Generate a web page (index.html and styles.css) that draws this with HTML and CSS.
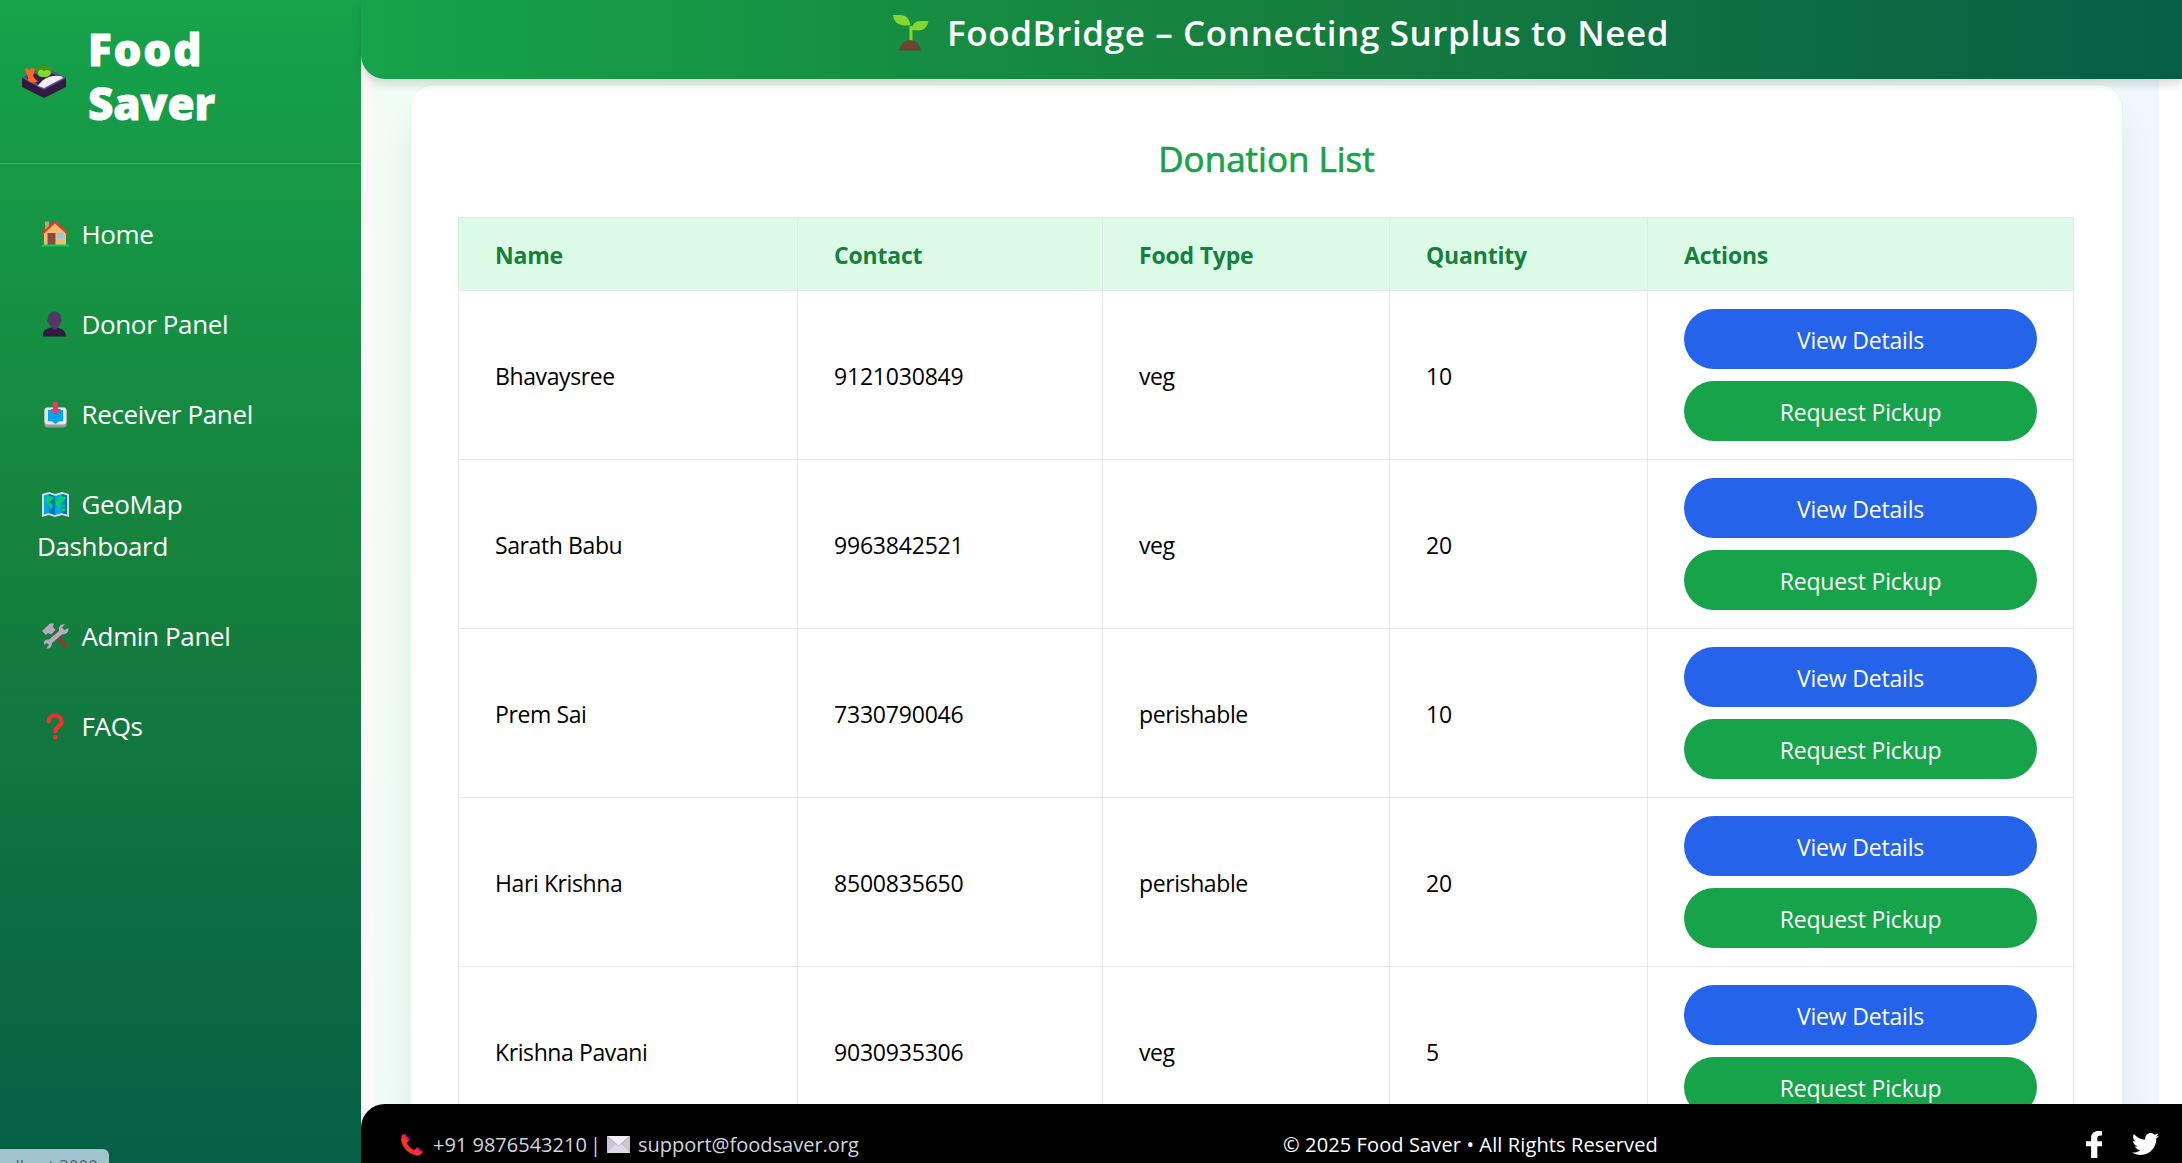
FILE: index.html
```html
<!DOCTYPE html>
<html lang="en">
<head>
<meta charset="utf-8">
<title>Food Saver</title>
<link rel="stylesheet" href="styles.css">
</head>
<body>
<div class="app">
  <aside class="sidebar">
    <div class="brand">
      <svg class="brand-icon" viewBox="0 0 44 34">
        <path d="M0 13 22 2 44 13V22L22 33 0 22Z" fill="#321b41"/>
        <path d="M0 13 22 2 44 13 22 25Z" fill="#5c508f"/>
        <path d="M4 13 22 5 40 13 22 22Z" fill="#33204a"/>
        <path d="M16 21C20 14 29 9 40 11.500L41 13 22 23Z" fill="#f3eef8"/>
        <path d="M14 6C14 2 18 0 22 1 27 0 30 3 30 6 29 11 25 13 22 12 17 12 14 10 14 6Z" fill="#44911b"/>
        <path d="M16 8C16 4 20 4 22 6 25 4 29 5 29 8 28 11 25 12 22 12 18 12 16 11 16 8Z" fill="#86d72f"/>
        <path d="M3 4Q6 2 7.500 6 9 1 12.500 3.500 13 7 11 10 12 14 16 16 13 19 8 17 5 15 6 11 3 7 3 4Z" fill="#ff6723"/>
      </svg>
      <h1 class="brand-name"><span class="brand-first">Food</span><span class="brand-second">Saver</span></h1>
    </div>
    <nav class="nav">
      <a class="nav-link"><svg class="nav-icon" viewBox="0 0 28 28"><path d="M4 1.500H8V9H4Z" fill="#d39b5c"/><path d="M3 13 14 3 25 13V25H3Z" fill="#f2bd73"/><path d="M1 14 14 2 27 14" fill="none" stroke="#f8312f" stroke-width="2.200"/><path d="M6.500 13H14.500V25H6.500Z" fill="#8a4b45"/><path d="M16 13H22V18.500H16Z" fill="#83cbff"/><path d="M1 24.500H28V26.500H1Z" fill="#00d26a"/></svg><span>Home</span></a>
      <a class="nav-link"><svg class="nav-icon" viewBox="0 0 28 28"><path d="M2 26.500Q1 19 10 17.500H16Q25 19 25 26.500Z" fill="#321b41"/><path d="M7 9Q7 1.500 13.500 1.500T20 9Q22 10 19.500 13 18 17 16 17.500V19.500H11.500V17.500Q9 16 7.500 13 5 10 7 9Z" fill="#533566"/></svg><span>Donor Panel</span></a>
      <a class="nav-link"><svg class="nav-icon" viewBox="0 0 28 28"><rect x="3.500" y="7.500" width="22" height="20" rx="3" fill="#9b9b9b"/><rect x="3.500" y="7.500" width="22" height="17" rx="3" fill="#e6e6e6"/><path d="M7 10H22V21L18 21.500 14.500 24 11 21.500 7 21Z" fill="#00a6ed"/><path d="M12 2H17V9H20L14.500 15 9.500 9H12Z" fill="#f8315f"/></svg><span>Receiver Panel</span></a>
      <a class="nav-link"><svg class="nav-icon" viewBox="0 0 28 28"><path d="M1 4 8 2 14 4 21 2 28 4V27L21 25 14 27 8 25 1 27Z" fill="#d9d9e0"/><path d="M3 5.500 8 4 14 6 21 4 26 5.500V24.500L21 23 14 25 8 23 3 24.500Z" fill="#00a6ed"/><path d="M8 4 14 6V25L8 23ZM21 4 26 5.500V24.500L21 23Z" fill="#0074ba"/><path d="M4 8 9 6 13 7 11 10 8 12 12 15 10 20 7 14 4 11ZM15 9 19 6 25 7 23 11 20 13 18 20 15 14ZM21 15H24V17H21ZM21 19 24 18V21H21Z" fill="#00d26a"/></svg><span>GeoMap Dashboard</span></a>
      <a class="nav-link"><svg class="nav-icon" viewBox="0 0 28 28"><path d="M11 10 14 8 26 22Q27 26 23 26.500Z" fill="#7d4533"/><path d="M1 9 9 1.500H13L12 5 14.500 8 10 12.500 7 11 5 13Z" fill="#b4acbc"/><path d="M18 9Q17 2 24 2L21 5.500 23.500 8 27.500 6Q28 12 21 12.500L11 21Q11 27 5 26.500L8 23 6 21 3 23Q2 17 8 17.500Z" fill="#b4acbc"/></svg><span>Admin Panel</span></a>
      <a class="nav-link"><svg class="nav-icon" viewBox="0 0 28 28"><path d="M7.500 9.500C7.500 1.500 20.500 1.500 20.500 9.500 20.500 15 14.500 13.500 14.500 19.500" fill="none" stroke="#f92f2f" stroke-width="4.200" stroke-linecap="round"/><circle cx="14.200" cy="25.300" r="2.400" fill="#f92f2f"/></svg><span>FAQs</span></a>
    </nav>
    <div class="status"><span>localhost:3000</span></div>
  </aside>
  <div class="page">
    <header class="topbar">
      <svg class="sprout" viewBox="0 0 38 38"><path d="M17.500 12H20.500V28H17.500Z" fill="#86d72f"/><path d="M1 1H9Q17 1 18.500 11.500H11Q2 10.500 1 1Z" fill="#86d72f"/><path d="M19.500 16Q20 7.500 28 7H36.500Q35 16 27 16.500Z" fill="#86d72f"/><path d="M7 36.500Q9 26 18 26T29 36.500Z" fill="#6d4534"/></svg>
      <span class="topbar-title">FoodBridge – Connecting Surplus to Need</span>
    </header>
    <main class="content">
      <section class="card">
        <h2 class="card-title">Donation List</h2>
        <table class="donations">
          <colgroup><col class="c-name"><col class="c-contact"><col class="c-type"><col class="c-qty"><col class="c-act"></colgroup>
          <thead><tr><th>Name</th><th>Contact</th><th>Food Type</th><th>Quantity</th><th>Actions</th></tr></thead>
          <tbody>
            <tr><td>Bhavaysree</td><td class="num">9121030849</td><td>veg</td><td class="num">10</td><td class="action-cell"><div class="actions"><button class="btn view">View Details</button><button class="btn pickup">Request Pickup</button></div></td></tr>
            <tr><td>Sarath Babu</td><td class="num">9963842521</td><td>veg</td><td class="num">20</td><td class="action-cell"><div class="actions"><button class="btn view">View Details</button><button class="btn pickup">Request Pickup</button></div></td></tr>
            <tr><td>Prem Sai</td><td class="num">7330790046</td><td>perishable</td><td class="num">10</td><td class="action-cell"><div class="actions"><button class="btn view">View Details</button><button class="btn pickup">Request Pickup</button></div></td></tr>
            <tr><td>Hari Krishna</td><td class="num">8500835650</td><td>perishable</td><td class="num">20</td><td class="action-cell"><div class="actions"><button class="btn view">View Details</button><button class="btn pickup">Request Pickup</button></div></td></tr>
            <tr><td>Krishna Pavani</td><td class="num">9030935306</td><td>veg</td><td class="num">5</td><td class="action-cell"><div class="actions"><button class="btn view">View Details</button><button class="btn pickup">Request Pickup</button></div></td></tr>
          </tbody>
        </table>
      </section>
    </main>
    <footer class="footer">
      <div class="contact">
        <svg class="phone" viewBox="0 0 22 22"><path d="M1 1 4 0 8 6 6 9Q8 14 13 16L16 14 21.500 18Q20 22 15 21.500 2 18 0 6Z" fill="#f8312f"/><path d="M2 .5 4 0 8.500 5 7.500 7ZM14.500 14 16.500 13 22 17.500 21 19Z" fill="#ca0b8a"/></svg>
        <span class="tel">+91 9876543210<span class="pipe"> |</span></span>
        <svg class="mail" viewBox="0 0 23 17"><path d="M0 0H23V17H0Z" fill="#cdc4d6"/><path d="M0 17 9 8H14L23 17Z" fill="#e1d8ec"/><path d="M0 0H23L11.500 10Z" fill="#f3eef8"/><path d="M0 0 11.500 10 23 0" stroke="#b4acbc" fill="none"/></svg>
        <span class="email">support@foodsaver.org</span>
      </div>
      <p class="copy">© 2025 Food Saver • All Rights Reserved</p>
      <div class="social">
        <svg class="fb" viewBox="22.890 0 256 512" preserveAspectRatio="none"><path d="M279.140 288l14.220-92.660h-88.910v-60.130c0-25.350 12.420-50.060 52.240-50.060h40.420V6.260S260.430 0 225.360 0c-73.220 0-121.080 44.380-121.080 124.720v70.620H22.890V288h81.390v224h100.170V288z" fill="#fff"/></svg>
        <svg class="tw" viewBox="0 48 512 416"><path d="M459.370 151.716c.325 4.548.325 9.097.325 13.645 0 138.720-105.583 298.558-298.558 298.558-59.452 0-114.680-17.219-161.137-47.106 8.447.974 16.568 1.299 25.340 1.299 49.055 0 94.213-16.568 130.274-44.832-46.132-.975-84.792-31.188-98.112-72.772 6.498.974 12.995 1.624 19.818 1.624 9.421 0 18.843-1.300 27.614-3.573-48.081-9.747-84.143-51.980-84.143-102.985v-1.299c13.969 7.797 30.214 12.670 47.431 13.319-28.264-18.843-46.781-51.005-46.781-87.391 0-19.492 5.197-37.360 14.294-52.954 51.655 63.675 129.300 105.258 216.365 109.807-1.624-7.797-2.599-15.918-2.599-24.040 0-57.828 46.782-104.934 104.934-104.934 30.213 0 57.502 12.670 76.670 33.137 23.715-4.548 46.456-13.320 66.599-25.340-7.798 24.366-24.366 44.833-46.132 57.827 21.117-2.273 41.584-8.122 60.426-16.243-14.292 20.791-32.161 39.308-52.628 54.253z" fill="#fff"/></svg>
      </div>
    </footer>
  </div>
</div>
</body>
</html>
```
FILE: styles.css
```css
* { box-sizing: border-box; margin: 0; padding: 0; }
body { height: 1163px; overflow: hidden; background: #fff; font-family: "Open Sans", "Noto Sans", sans-serif; color: #000; }
svg { display: block; flex: none; }
.app { display: grid; grid-template-columns: 361px 1fr; height: 1163px; }

.sidebar { position: relative; background: linear-gradient(180deg, #16a34a, #15803d 50%, #065f46); color: #fff; overflow: hidden; }
.brand { display: flex; align-items: center; gap: 22px; height: 164px; padding: 0 0 11px 22px; border-bottom: 1px solid #22c55e; }
.brand-icon { width: 44px; height: 34px; margin-top: 12px; }
.brand-name { font-size: 44px; line-height: 54px; font-weight: 800; -webkit-text-stroke: .8px #fff; }
.brand-name span { display: block; }
.brand-first { letter-spacing: 1.8px; }
.brand-second { letter-spacing: -.1px; }
.nav { padding-top: 25px; }
.nav-link { display: block; padding: 24px 60px 24px 37px; font-size: 26px; line-height: 42px; letter-spacing: -.36px; }
.nav-icon { display: inline-block; width: 28px; height: 28px; margin: 0 12.5px 0 4px; vertical-align: -4px; }
.status { position: absolute; left: 0; bottom: 0; width: 109px; height: 14px; overflow: hidden; background: #a2c4cf; border-radius: 0 6px 0 0; display: flex; justify-content: flex-end; padding: 5px 11px 0 0; color: #56666b; font-size: 17px; line-height: 24px; }

.page { display: grid; grid-template-rows: 79px 1025px 59px; min-width: 0; background: linear-gradient(90deg, #f9f9f9 50%, #fff 50%); }
.topbar { position: relative; z-index: 2; display: flex; align-items: center; padding: 0 0 13px 531px; background: linear-gradient(90deg, #16a34a, #15803d 50%, #065f46); border-radius: 0 0 0 24px; color: #fff; box-shadow: 0 6px 9px rgba(0,0,0,.13); }
.sprout { width: 38px; height: 38px; }
.topbar-title { margin-left: 17px; font-size: 35px; line-height: 50px; font-weight: 600; letter-spacing: .61px; white-space: nowrap; }
.content { min-height: 0; overflow: hidden; margin: 0 23px 0 12px; padding: 5px 36px 0 37px; background: linear-gradient(120deg, #f0fdf4, #eff6ff); }
.card { height: 1200px; padding: 46px 47px 0; background: #fff; border: 1px solid #dcfce7; border-radius: 24px; box-shadow: 0 30px 37px -7px rgba(0,0,0,.1); }
.card-title { height: 86px; font-size: 35px; line-height: 56px; font-weight: 500; text-align: center; color: #16a34a; -webkit-text-stroke: .7px #16a34a; }
.donations { width: 1615px; table-layout: fixed; border-collapse: collapse; font-size: 23px; line-height: 36px; }
.c-name { width: 339px; }
.c-contact { width: 305px; }
.c-type { width: 287px; }
.c-qty { width: 258px; }
.c-act { width: 426px; }
.donations th { height: 73px; padding: 2px 36px 0; background: #dcfce7; color: #15803d; border: 1px solid #e5e7eb; text-align: left; font-weight: 700; letter-spacing: -.2px; }
.donations td { height: 169px; padding: 19px 36px 18px; border: 1px solid #e5e7eb; letter-spacing: -.4px; }
.donations .num { letter-spacing: -.2px; }
.donations .action-cell { padding: 18px 36px; }
.actions { display: flex; flex-direction: column; gap: 12px; }
.btn { height: 60px; padding-top: 2px; border: 0; border-radius: 30px; color: #fff; font: inherit; letter-spacing: -.18px; }
.view { background: #2563eb; }
.pickup { background: #16a34a; }

.footer { position: relative; z-index: 2; display: flex; align-items: center; padding: 22px 23px 0 40px; background: #000; border-radius: 24px 0 0 0; font-size: 20px; line-height: 32px; color: #fff; white-space: nowrap; }
.contact { display: flex; align-items: center; width: 882px; color: #d1d5db; }
.phone { width: 22px; height: 22px; margin-right: 10px; }
.tel { width: 174px; }
.pipe { margin-left: -2px; }
.mail { width: 23px; height: 17px; margin-right: 8px; }
.copy { padding-top: 1px; letter-spacing: .12px; }
.social { display: flex; align-items: center; gap: 30px; margin: -1px 0 0 auto; }
.fb { width: 16px; height: 27px; }
.tw { width: 27px; height: 22px; }
```
